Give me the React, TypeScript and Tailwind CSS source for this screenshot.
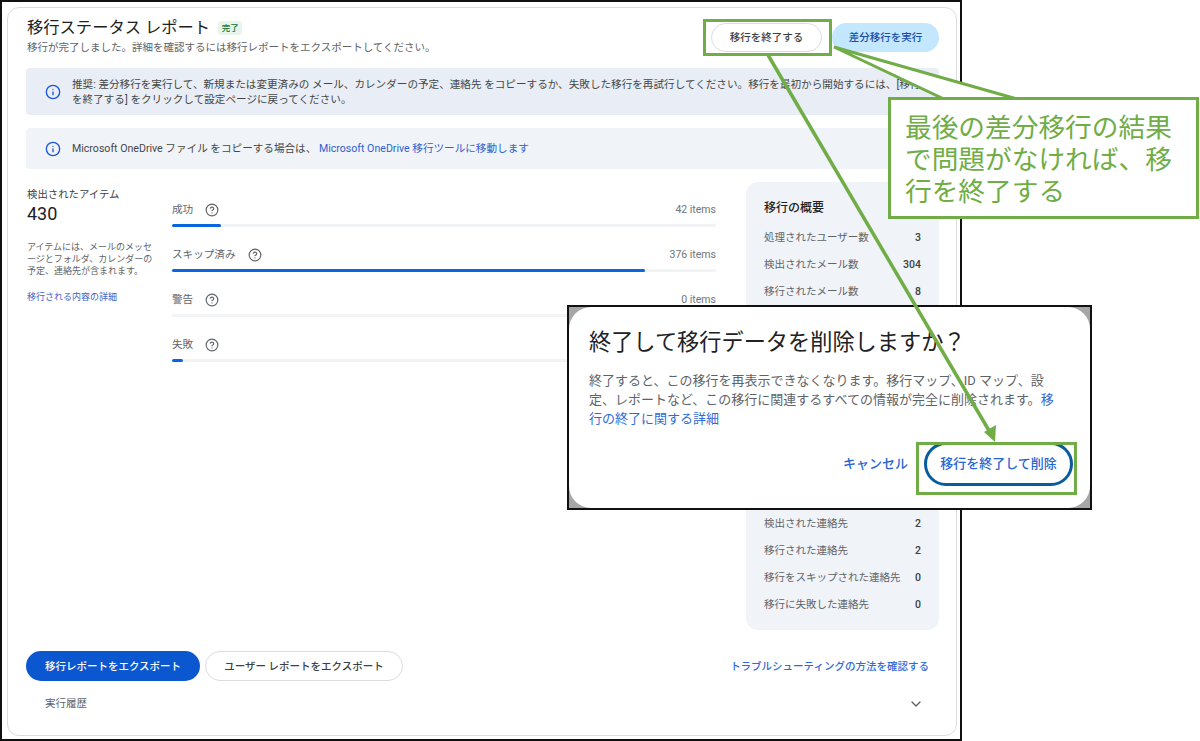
import React from 'react';
import { Info, CircleHelp, ChevronDown } from 'lucide-react';

const bars = [
  { label: '成功', count: '42 items', fill: 'w-[49px]' },
  { label: 'スキップ済み', count: '376 items', fill: 'w-[473px]' },
  { label: '警告', count: '0 items', fill: 'w-0' },
  { label: '失敗', count: '', fill: 'w-[11px]' },
];

const topRows = [
  ['処理されたユーザー数', '3'],
  ['検出されたメール数', '304'],
  ['移行されたメール数', '8'],
];

const bottomRows = [
  ['検出された連絡先', '2'],
  ['移行された連絡先', '2'],
  ['移行をスキップされた連絡先', '0'],
  ['移行に失敗した連絡先', '0'],
];

function SummaryRow({ label, value }: { label: string; value: string }) {
  return (
    <div className="flex items-center justify-between h-[27px] text-[10.5px]">
      <span className="text-[#5f6368]">{label}</span>
      <span className="font-medium text-[#3c4043]">{value}</span>
    </div>
  );
}

export default function App() {
  return (
    <div className="relative w-[1200px] h-[741px] bg-white overflow-hidden font-['Roboto','Noto_Sans_CJK_JP',sans-serif]">
      {/* Screenshot frame */}
      <div className="w-[962px] h-[741px] border-2 border-[#111] pt-[5px] pl-[5px] pr-[3px] pb-[3px]">
        <div className="h-full border border-[#dadce0] rounded-xl pl-[18px] pr-[17px] pt-[10px]">
          {/* Header */}
          <div className="flex justify-between">
            <div>
              <div className="flex items-center gap-2 h-5 pl-px">
                <h1 className="text-[16.3px] leading-5 text-[#202124]">移行ステータス レポート</h1>
                <span className="h-[14px] w-6 flex items-center justify-center rounded-sm bg-[#e6f4ea] text-[#137333] text-[8.5px] font-medium">完了</span>
              </div>
              <p className="mt-[3px] pl-px text-[10.5px] leading-[14px] text-[#5f6368]">移行が完了しました。詳細を確認するには移行レポートをエクスポートしてください。</p>
            </div>
            <div className="flex gap-[10px] mt-[5px] h-[29px]">
              <button className="w-[111px] pt-px rounded-full border border-[#dadce0] text-[10.5px] font-medium text-[#3c4043]">移行を終了する</button>
              <button className="w-[107px] pt-px rounded-full bg-[#c2e7ff] text-[10.5px] font-medium text-[#174ea6]">差分移行を実行</button>
            </div>
          </div>

          {/* Banners */}
          <div className="mt-[13px] h-[47px] flex items-center rounded bg-[#e9edf5] pl-[19px] overflow-hidden">
            <Info size={16} strokeWidth={2} className="text-[#1a56d6] shrink-0" />
            <p className="ml-[11px] text-[10.6px] leading-[15px] text-[#444746] whitespace-nowrap">
              推奨: 差分移行を実行して、新規または変更済みの メール、カレンダーの予定、連絡先 をコピーするか、失敗した移行を再試行してください。移行を最初から開始するには、[移行
              <br />
              を終了する] をクリックして設定ページに戻ってください。
            </p>
          </div>
          <div className="mt-[13px] h-[41px] flex items-center rounded bg-[#f0f3f8] pl-[19px]">
            <Info size={16} strokeWidth={2} className="text-[#1a56d6] shrink-0" />
            <p className="ml-[11px] text-[10.6px] text-[#444746]">
              Microsoft OneDrive ファイル をコピーする場合は、 <span className="text-[#2f5fd0]">Microsoft OneDrive 移行ツールに移動します</span>
            </p>
          </div>

          {/* Main */}
          <div className="mt-[13px] flex">
            <div className="w-[146px] pt-[6px] pl-px">
              <div className="text-[10.4px] leading-[14px] text-[#3c4043]">検出されたアイテム</div>
              <div className="text-[18px] leading-6 text-[#202124]">430</div>
              <p className="mt-[15px] w-[130px] text-[9px] leading-3 text-[#5f6368]">アイテムには、メールのメッセージとフォルダ、カレンダーの予定、連絡先が含まれます。</p>
              <div className="mt-[13px] text-[9px] leading-[14px] text-[#3f63c9]">移行される内容の詳細</div>
            </div>

            <div className="w-[544px] pt-5">
              {bars.map((bar) => (
                <div key={bar.label} className="h-[45px]">
                  <div className="flex items-center justify-between h-4">
                    <div className="flex items-center gap-3 text-[10.6px] text-[#5f6368]">
                      {bar.label}
                      <CircleHelp size={14} className="text-[#5f6368]" />
                    </div>
                    <span className="text-[10.5px] text-[#70757a]">{bar.count}</span>
                  </div>
                  <div className="mt-[6px] h-[3px] rounded-full bg-[#f1f3f4]">
                    <div className={`h-full rounded-full bg-[#0b65e0] ${bar.fill}`} />
                  </div>
                </div>
              ))}
            </div>

            <div className="ml-[30px] w-[193px] h-[448px] rounded-xl bg-[#f0f3f8] pt-[18px] px-[18px]">
              <div className="mb-2 text-[12px] leading-4 font-medium text-[#202124]">移行の概要</div>
              {topRows.map(([label, value]) => (
                <SummaryRow key={label} label={label} value={value} />
              ))}
              <div className="h-[205px]" />
              {bottomRows.map(([label, value]) => (
                <SummaryRow key={label} label={label} value={value} />
              ))}
            </div>
          </div>

          {/* Footer */}
          <div className="mt-[21px] flex items-center">
            <button className="w-[174px] h-[30px] pt-px rounded-full bg-[#0b57d0] text-white text-[10.5px] font-medium">移行レポートをエクスポート</button>
            <button className="ml-[5px] w-[198px] h-[30px] pt-px rounded-full border border-[#dadce0] text-[10.5px] font-medium text-[#3c4043]">ユーザー レポートをエクスポート</button>
            <span className="ml-auto mr-[10px] pt-px text-[10.5px] font-medium text-[#2f6bd8]">トラブルシューティングの方法を確認する</span>
          </div>
          <div className="mt-3 h-[22px] flex items-center justify-between pl-[19px] pr-[15px]">
            <span className="text-[10.5px] text-[#5f6368]">実行履歴</span>
            <ChevronDown size={16} className="text-[#5f6368]" />
          </div>
        </div>
      </div>

      {/* Dialog, pasted over the screenshot */}
      <div className="absolute left-[567px] top-[305px] w-[525px] h-[205px] border-2 border-[#111] bg-[#a6a6a6]">
        <div className="h-full rounded-[22px] bg-white pl-5 pr-4 pt-5">
          <h2 className="text-[22.2px] leading-[30px] text-[#202124] whitespace-nowrap">終了して移行データを削除しますか？</h2>
          <p className="mt-[14px] text-[13px] leading-[19px] text-[#5f6368] whitespace-nowrap">
            終了すると、この移行を再表示できなくなります。移行マップ、ID マップ、設
            <br />
            定、レポートなど、この移行に関連するすべての情報が完全に削除されます。<span className="text-[#2f6bd8]">移</span>
            <br />
            <span className="text-[#2f6bd8]">行の終了に関する詳細</span>
          </p>
          <div className="mt-[14px] flex items-center justify-end gap-[16px] pr-px">
            <span className="text-[13px] font-medium text-[#2566d0]">キャンセル</span>
            <button className="w-[149px] h-[44px] rounded-full border-[3px] border-[#0b5c9e] text-[13px] font-medium text-[#2566d0]">移行を終了して削除</button>
          </div>
        </div>
      </div>

      {/* Callout tail and arrow */}
      <svg className="absolute inset-0" width="1200" height="741" viewBox="0 0 1200 741" fill="none">
        <polygon points="834,47 1017,99 944,99" fill="#fff" stroke="#70ad47" strokeWidth="3" />
        <line x1="768" y1="55" x2="991" y2="434" stroke="#70ad47" strokeWidth="3.5" />
        <polygon points="995,442 984,432 996,425" fill="#70ad47" />
      </svg>

      {/* Green highlights */}
      <div className="absolute left-[703px] top-[19px] w-[129px] h-[37px] border-[3px] border-[#70ad47]" />
      <div className="absolute left-[916px] top-[442px] w-[161px] h-[53px] border-[3px] border-[#70ad47]" />

      {/* Callout */}
      <div className="absolute left-[888px] top-[97px] w-[311px] h-[122px] border-[3px] border-[#70ad47] bg-white pl-[14px] pt-3 text-[26.7px] leading-[32px] text-[#70ad47] whitespace-nowrap">
        最後の差分移行の結果
        <br />
        で問題がなければ、移
        <br />
        行を終了する
      </div>
    </div>
  );
}
